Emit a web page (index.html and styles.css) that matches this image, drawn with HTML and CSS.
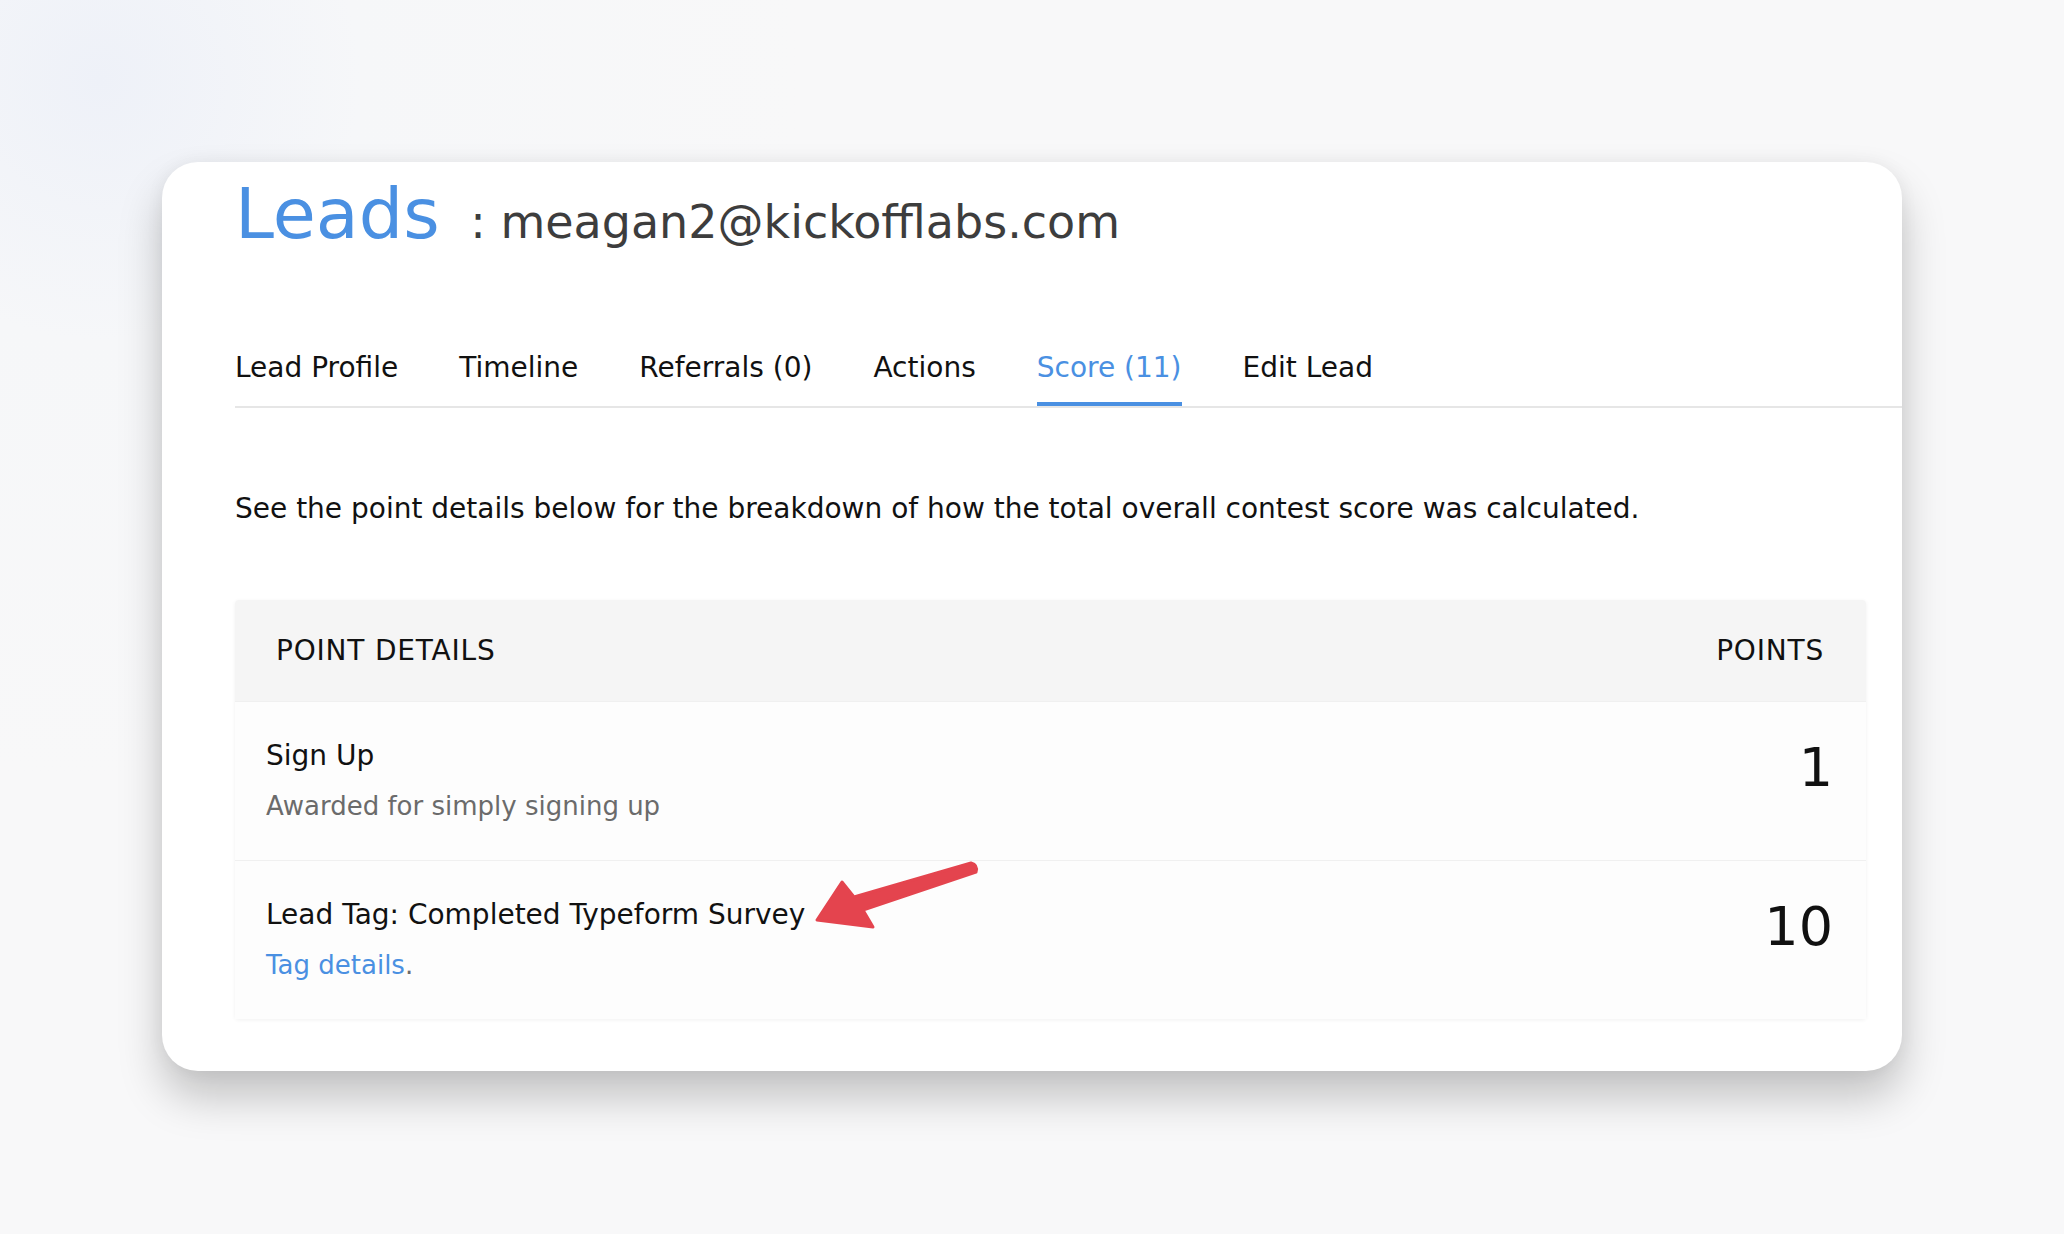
FILE: index.html
```html
<!DOCTYPE html>
<html>
<head>
<meta charset="utf-8">
<link rel="stylesheet" href="styles.css">
</head>
<body>
<div class="page">
  <div class="card">
    <h1 class="title"><span class="title-main">Leads</span><span class="title-sub"> : meagan2@kickofflabs.com</span></h1>
    <nav class="tabs">
      <a class="tab">Lead Profile</a>
      <a class="tab">Timeline</a>
      <a class="tab">Referrals (0)</a>
      <a class="tab">Actions</a>
      <a class="tab active">Score (11)</a>
      <a class="tab">Edit Lead</a>
    </nav>
    <div class="content">
      <p class="intro">See the point details below for the breakdown of how the total overall contest score was calculated.</p>
      <div class="table">
        <div class="thead">
          <span>POINT DETAILS</span>
          <span>POINTS</span>
        </div>
        <div class="row">
          <div class="info">
            <div class="name">Sign Up</div>
            <div class="desc">Awarded for simply signing up</div>
          </div>
          <div class="pts">1</div>
        </div>
        <div class="row">
          <div class="info">
            <div class="name">Lead Tag: Completed Typeform Survey</div>
            <div class="desc"><a class="link">Tag details</a>.</div>
          </div>
          <div class="pts">10</div>
        </div>
        <svg class="arrow" width="175" height="75" viewBox="0 0 175 75">
          <path d="M7 60 L32 22 L44 37 L161 3 Q168 5 166 12 L53 50 L63 67 Z" fill="#e4444e" stroke="#e4444e" stroke-width="3" stroke-linejoin="round"/>
        </svg>
      </div>
    </div>
  </div>
</div>
</body>
</html>
```

FILE: styles.css
```css
html, body {
  margin: 0;
  padding: 0;
}
body {
  width: 2064px;
  height: 1234px;
  overflow: hidden;
  background: radial-gradient(circle at 100px 80px, #eef1f8 0, #f6f7f9 260px, #f8f8f9 700px);
  font-family: "DejaVu Sans", Verdana, sans-serif;
}
.page {
  padding: 162px 0 0 162px;
}
.card {
  width: 1740px;
  height: 909px;
  box-sizing: border-box;
  background: #fff;
  border-radius: 36px;
  box-shadow: 0 26px 44px rgba(0, 0, 0, 0.22), 0 0 18px rgba(0, 0, 0, 0.05);
  padding: 0 0 0 73px;
  position: relative;
}
.title {
  margin: 0;
  padding-top: 12px;
  font-weight: normal;
  line-height: 80px;
  height: 80px;
  white-space: nowrap;
}
.title-main {
  font-size: 70px;
  color: #4a90e2;
}
.title-sub {
  font-size: 46px;
  color: #3d3d3d;
  padding-left: 16px;
}
.tabs {
  display: flex;
  gap: 61px;
  margin-top: 97px;
  border-bottom: 2px solid #e6e6e6;
}
.tab {
  font-size: 28px;
  color: #111;
  line-height: 34px;
  padding-bottom: 17px;
  border-bottom: 4px solid transparent;
}
.tab.active {
  color: #4a90e2;
  border-bottom-color: #4a90e2;
}
.content {
  padding-right: 36px;
}
.intro {
  margin: 84px 0 0 0;
  font-size: 28px;
  line-height: 34px;
  color: #111;
}
.table {
  margin-top: 74px;
  position: relative;
  background: #fff;
  border-radius: 4px;
  box-shadow: 0 1px 4px rgba(0, 0, 0, 0.06);
}
.thead {
  display: flex;
  justify-content: space-between;
  align-items: center;
  height: 101px;
  padding: 0 42px 0 41px;
  background: #f5f5f5;
  font-size: 28px;
  letter-spacing: 0.8px;
  color: #111;
  border-radius: 4px 4px 0 0;
}
.row {
  display: flex;
  justify-content: space-between;
  align-items: center;
  height: 158px;
  padding: 0 33px 0 31px;
  border-top: 1px solid #f0f0f0;
  background: #fdfdfd;
}
.name {
  font-size: 28px;
  color: #111;
  line-height: 34px;
}
.desc {
  font-size: 26px;
  color: #6b6b6b;
  line-height: 34px;
  margin-top: 16px;
}
.link {
  color: #4a90e2;
}
.pts {
  font-size: 54px;
  color: #111;
  padding-bottom: 28px;
}
.arrow {
  position: absolute;
  left: 575px;
  top: 260px;
}
```
